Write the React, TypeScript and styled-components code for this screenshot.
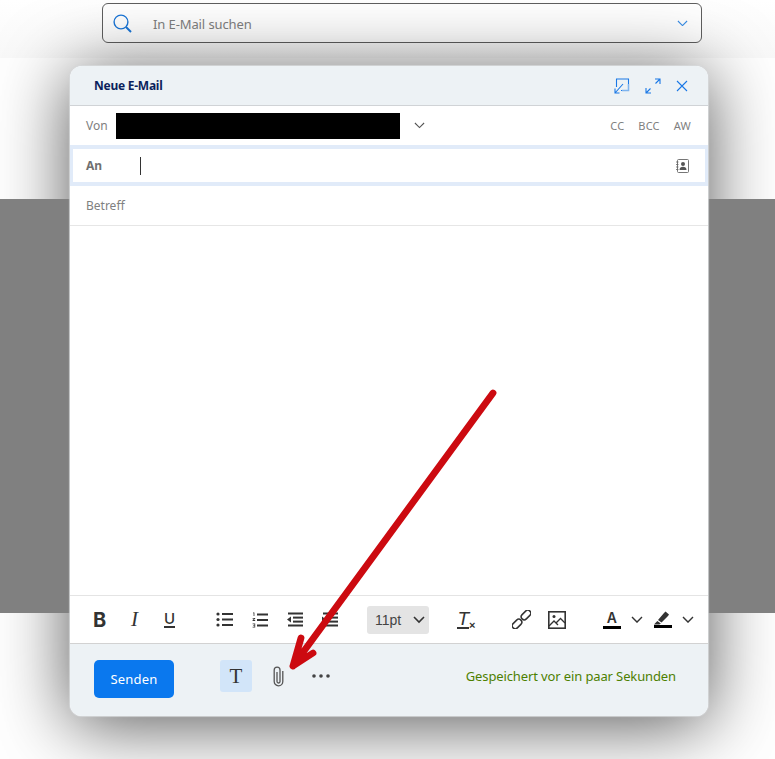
import React from 'react';
import styled, { createGlobalStyle } from 'styled-components';

const Global = createGlobalStyle`
  html, body { margin: 0; padding: 0; background: #fff; }
  body { font-family: "Noto Sans", "Open Sans", sans-serif; }
`;

const Page = styled.div`
  position: relative;
  width: 775px;
  height: 759px;
  overflow: hidden;
  background: #fff;
`;

const SearchStrip = styled.div`
  height: 58px;
  padding: 3px 73px 0 102px;
  box-sizing: border-box;
  background: linear-gradient(#fff, #f9f9f9);
`;

const SearchBar = styled.div`
  height: 40px;
  box-sizing: border-box;
  display: flex;
  align-items: center;
  padding: 0 13px 0 10px;
  background: #fff;
  border: 1px solid #5f5f5f;
  border-radius: 6px;
`;

const SearchText = styled.span`
  flex: 1;
  margin-left: 21px;
  padding-top: 2px;
  font-size: 13px;
  letter-spacing: -0.1px;
  color: #808080;
`;

const Backdrop = styled.div`
  position: relative;
  z-index: 2;
  height: 414px;
  margin-top: 141px;
  background: #808080;
`;

const CardShadow = styled.div`
  position: absolute;
  z-index: 1;
  left: 70px;
  top: 66px;
  width: 638px;
  height: 650px;
  border-radius: 12px;
  box-shadow: 0 8px 72px rgba(0, 0, 0, 0.68);
`;

const Card = styled.div`
  position: absolute;
  z-index: 3;
  left: 70px;
  top: 66px;
  width: 638px;
  height: 650px;
  box-sizing: border-box;
  display: flex;
  flex-direction: column;
  background: #fff;
  border-radius: 12px;
  overflow: hidden;
  box-shadow: 0 0 1px 1px rgba(214, 216, 218, 0.85);
`;

const Header = styled.div`
  height: 40px;
  box-sizing: border-box;
  flex: none;
  display: flex;
  align-items: center;
  padding: 0 20px 0 24px;
  background: #edf2f5;
  border-bottom: 1px solid #d0d3d6;
`;

const Title = styled.span`
  flex: 1;
  font-size: 12px;
  font-weight: 700;
  letter-spacing: -0.25px;
  color: #0b1f5c;
`;

const HeaderIcons = styled.div`
  display: flex;
  align-items: center;
  gap: 15px;
`;

const FromRow = styled.div`
  height: 39px;
  flex: none;
  display: flex;
  align-items: center;
  padding: 0 17px 0 16px;
`;

const FieldLabel = styled.span<{ $bold?: boolean; $width?: number }>`
  width: ${(p) => p.$width ?? 30}px;
  flex: none;
  font-size: 12px;
  font-weight: ${(p) => (p.$bold ? 700 : 400)};
  color: ${(p) => (p.$bold ? '#707070' : '#808080')};
`;

const Redacted = styled.div`
  width: 284px;
  height: 26px;
  flex: none;
  background: #000;
`;

const FromChevron = styled.div`
  flex: 1;
  display: flex;
  padding-left: 14px;
`;

const CopyLinks = styled.div`
  display: flex;
  gap: 14px;
`;

const CopyLink = styled.span`
  font-size: 11px;
  letter-spacing: 0.2px;
  color: #808080;
`;

const ToRow = styled.div`
  height: 41px;
  flex: none;
  box-sizing: border-box;
  display: flex;
  align-items: center;
  padding: 0 16px 0 13px;
  border: solid #e1ebf9;
  border-width: 4px 3px;
`;

const Caret = styled.div`
  flex: 1;
  display: flex;
  &::before {
    content: '';
    width: 1px;
    height: 18px;
    background: #333;
  }
`;

const SubjectRow = styled.div`
  height: 40px;
  flex: none;
  box-sizing: border-box;
  display: flex;
  align-items: center;
  padding: 0 16px;
  border-bottom: 1px solid #e6e6e6;
`;

const Editor = styled.div`
  flex: 1;
`;

const Toolbar = styled.div`
  height: 49px;
  flex: none;
  box-sizing: border-box;
  display: flex;
  align-items: center;
  padding-left: 12px;
  border-top: 1px solid #e4e4e4;
  border-bottom: 1px solid #d2d2d2;
`;

const ToolGroup = styled.div<{ $after?: number }>`
  display: flex;
  align-items: center;
  margin-right: ${(p) => p.$after ?? 20}px;
`;

const Tool = styled.div<{ $narrow?: boolean }>`
  width: ${(p) => (p.$narrow ? 25.5 : 35)}px;
  height: 28px;
  display: flex;
  align-items: center;
  justify-content: center;
  color: #333;
`;

const BoldGlyph = styled.span`
  font: 700 20px "Inter", "Liberation Sans", sans-serif;
  color: #333;
`;

const ItalicGlyph = styled.span`
  font: italic 400 21px "Liberation Serif", serif;
  color: #333;
`;

const UnderGlyph = styled.span`
  font: 500 15px "Inter", "Liberation Sans", sans-serif;
  line-height: 14px;
  color: #333;
  border-bottom: 2px solid #333;
`;

const ClearGlyph = styled.span`
  font: italic 400 19px "Liberation Sans", sans-serif;
  line-height: 17px;
  color: #333;
  border-bottom: 2px solid #333;
`;

const ClearMark = styled.span`
  font: 700 11px "Liberation Sans", sans-serif;
  color: #333;
  align-self: flex-end;
  margin-bottom: 3px;
`;

const ColorA = styled.span`
  width: 18px;
  text-align: center;
  font: 600 14px "Inter", "Liberation Sans", sans-serif;
  line-height: 16px;
  color: #333;
  border-bottom: 3px solid #000;
`;

const SizeSelect = styled.div`
  width: 62px;
  height: 28px;
  box-sizing: border-box;
  display: flex;
  align-items: center;
  justify-content: space-between;
  padding: 0 3px 0 8px;
  background: #e4e4e4;
  border-radius: 3px;
  font: 400 14px "Liberation Sans", sans-serif;
  color: #444;
`;

const Footer = styled.div`
  height: 72px;
  flex: none;
  box-sizing: border-box;
  display: flex;
  align-items: flex-start;
  padding: 16px 32px 0 24px;
  background: #edf2f5;
`;

const SendButton = styled.button`
  width: 80px;
  height: 38px;
  padding: 0;
  border: 0;
  border-radius: 5px;
  background: #0a78ee;
  color: #fff;
  font: 400 13px "Noto Sans", sans-serif;
  letter-spacing: 0.2px;
`;

const FormatToggle = styled.div`
  width: 32px;
  height: 32px;
  margin-left: 46px;
  display: flex;
  align-items: center;
  justify-content: center;
  background: #d2e5f9;
  border-radius: 3px;
  font: 400 21px "Liberation Serif", serif;
  color: #333;
`;

const ClipSlot = styled.div`
  width: 11px;
  height: 32px;
  margin-left: 21px;
  display: flex;
  align-items: center;
`;

const DotsSlot = styled.div`
  height: 32px;
  margin-left: 28px;
  flex: 1;
  display: flex;
  align-items: center;
`;

const SavedText = styled.span`
  height: 32px;
  line-height: 32px;
  font-size: 13px;
  letter-spacing: -0.12px;
  color: #4d8000;
`;

const ArrowLayer = styled.svg`
  position: absolute;
  z-index: 4;
  left: 0;
  top: 0;
  pointer-events: none;
`;

const Chevron = ({ color = '#555', w = 12, weight = 1.2 }: { color?: string; w?: number; weight?: number }) => (
  <svg width={w} height={w * 0.6} viewBox="0 0 12 7" fill="none" stroke={color} strokeWidth={weight}>
    <path d="M1 1l5 5 5-5" />
  </svg>
);

const BulletList = () => (
  <svg width="17" height="15" viewBox="0 0 17 15" fill="#333">
    <circle cx="2" cy="2" r="1.600" />
    <circle cx="2" cy="7.500" r="1.600" />
    <circle cx="2" cy="13" r="1.600" />
    <rect x="6" y="1" width="11" height="2" />
    <rect x="6" y="6.500" width="11" height="2" />
    <rect x="6" y="12" width="11" height="2" />
  </svg>
);

const NumberList = () => (
  <svg width="16" height="16" viewBox="0 0 16 16" fill="#333">
    <path d="M1 .5h1.400v3.500h-.8V1.300H1zM.6 6h2.600v.8L1.700 8.100h1.500v.8H.6v-.8l1.600-1.300H.6zM.6 11.600h2.600v3.800H.6v-.7h1.800v-.9H1v-.6h1.400v-.9H.6z" />
    <rect x="5" y="1.500" width="11" height="2" />
    <rect x="5" y="7" width="11" height="2" />
    <rect x="5" y="12.500" width="11" height="2" />
  </svg>
);

const Outdent = ({ flip }: { flip?: boolean }) => (
  <svg width="17" height="15" viewBox="0 0 17 15" fill="#333">
    <rect x="2" y="0.500" width="15" height="2" />
    <rect x="7" y="4.600" width="10" height="2" />
    <rect x="7" y="8.600" width="10" height="2" />
    <rect x="2" y="12.500" width="15" height="2" />
    {flip ? <path d="M1 4.500l4 3-4 3z" /> : <path d="M5 4.500v6l-4-3z" />}
  </svg>
);

export default function App() {
  return (
    <Page>
      <Global />
      <SearchStrip>
        <SearchBar>
          <svg width="19" height="19" viewBox="0 0 19 19" fill="none" stroke="#1a76d8">
            <circle cx="8" cy="8" r="6.900" strokeWidth="1.400" />
            <path d="M13 13l5 5" strokeWidth="2" />
          </svg>
          <SearchText>In E-Mail suchen</SearchText>
          <Chevron color="#3a8fe8" w={11} />
        </SearchBar>
      </SearchStrip>
      <Backdrop />
      <CardShadow />
      <Card>
        <Header>
          <Title>Neue E-Mail</Title>
          <HeaderIcons>
            <svg width="16" height="16" viewBox="0 0 16 16" fill="none" stroke="#1a78e6">
              <path d="M2.500 9V1H14.500V12.500H7" strokeWidth="1.100" />
              <path d="M14.500 6v6.500H8" stroke="#7fb4ee" strokeWidth="1.400" />
              <path d="M9 6L1 15M1 10.500V15H5.500" strokeWidth="1.100" />
            </svg>
            <svg width="16" height="16" viewBox="0 0 16 16" fill="none" stroke="#1a78e6" strokeWidth="1.100">
              <path d="M10 1h5v5M15 1L10.500 5.500M6 15H1v-5M1 15l4.500-4.500" />
            </svg>
            <svg width="12" height="12" viewBox="0 0 12 12" fill="none" stroke="#1a78e6" strokeWidth="1.100">
              <path d="M1 1l10 10M11 1L1 11" />
            </svg>
          </HeaderIcons>
        </Header>
        <FromRow>
          <FieldLabel>Von</FieldLabel>
          <Redacted />
          <FromChevron>
            <Chevron color="#555" w={11} />
          </FromChevron>
          <CopyLinks>
            <CopyLink>CC</CopyLink>
            <CopyLink>BCC</CopyLink>
            <CopyLink>AW</CopyLink>
          </CopyLinks>
        </FromRow>
        <ToRow>
          <FieldLabel $bold $width={54}>An</FieldLabel>
          <Caret />
          <svg width="13" height="14" viewBox="0 0 13 14" fill="none" stroke="#666" strokeWidth="0.900">
            <rect x="1.500" y="0.500" width="11" height="13" rx="1" />
            <path d="M0 3h2.500M0 5.500h2.500M0 8h2.500M0 10.500h2.500" strokeWidth="0.800" />
            <circle cx="7" cy="5" r="2" fill="#555" stroke="none" />
            <path d="M3.500 11c0-2.500 1.500-3.300 3.500-3.300s3.500.8 3.500 3.300z" fill="#555" stroke="none" />
          </svg>
        </ToRow>
        <SubjectRow>
          <FieldLabel>Betreff</FieldLabel>
        </SubjectRow>
        <Editor />
        <Toolbar>
          <ToolGroup>
            <Tool><BoldGlyph>B</BoldGlyph></Tool>
            <Tool><ItalicGlyph>I</ItalicGlyph></Tool>
            <Tool><UnderGlyph>U</UnderGlyph></Tool>
          </ToolGroup>
          <ToolGroup>
            <Tool><BulletList /></Tool>
            <Tool><NumberList /></Tool>
            <Tool><Outdent /></Tool>
            <Tool><Outdent flip /></Tool>
          </ToolGroup>
          <ToolGroup>
            <SizeSelect>
              11pt
              <svg width="14" height="8" viewBox="0 0 14 8" fill="none" stroke="#333" strokeWidth="1.600">
                <path d="M2 1l5 5 5-5" />
              </svg>
            </SizeSelect>
          </ToolGroup>
          <ToolGroup>
            <Tool>
              <ClearGlyph>T</ClearGlyph>
              <ClearMark>×</ClearMark>
            </Tool>
          </ToolGroup>
          <ToolGroup $after={25}>
            <Tool>
              <svg width="19" height="19" viewBox="0 0 19 19" fill="none" stroke="#333" strokeWidth="1.500">
                <rect x="-0.500" y="11" width="11" height="6" rx="3" transform="rotate(-45 5 14)" />
                <rect x="8.500" y="2" width="11" height="6" rx="3" transform="rotate(-45 14 5)" />
              </svg>
            </Tool>
            <Tool>
              <svg width="18" height="18" viewBox="0 0 18 18" fill="none" stroke="#333" strokeWidth="1.600">
                <rect x="0.800" y="0.800" width="16.400" height="16.400" />
                <circle cx="6" cy="5.500" r="1.500" fill="#333" stroke="none" />
                <path d="M1 15l5-5 4 4M8 12l4.500-4.500L17 12" strokeWidth="1.300" />
              </svg>
            </Tool>
          </ToolGroup>
          <ToolGroup>
            <Tool $narrow><ColorA>A</ColorA></Tool>
            <Tool $narrow><Chevron color="#333" weight={1.4} /></Tool>
            <Tool $narrow>
              <svg width="18" height="17" viewBox="0 0 18 17">
                <path d="M11.500 0.500l3.500 3-1 1.500-6.500 6.500L4 9l6-7zM3.300 10l3.500 2.500-1.500 1H0z" fill="#333" />
                <rect y="14" width="18" height="3" fill="#000" />
              </svg>
            </Tool>
            <Tool $narrow><Chevron color="#333" weight={1.4} /></Tool>
          </ToolGroup>
        </Toolbar>
        <Footer>
          <SendButton>Senden</SendButton>
          <FormatToggle>T</FormatToggle>
          <ClipSlot>
            <svg width="11" height="21" viewBox="0 0 11 21" fill="none" stroke="#555" strokeWidth="1.300">
              <path d="M4 6v9.500a1.500 1.500 0 0 0 3 0V4a2.800 2.800 0 0 0-5.800 0v11.500a4.300 4.300 0 0 0 8.600 0V5" />
            </svg>
          </ClipSlot>
          <DotsSlot>
            <svg width="18" height="4" viewBox="0 0 18 4" fill="#444">
              <circle cx="2" cy="2" r="1.800" />
              <circle cx="9" cy="2" r="1.800" />
              <circle cx="16" cy="2" r="1.800" />
            </svg>
          </DotsSlot>
          <SavedText>Gespeichert vor ein paar Sekunden</SavedText>
        </Footer>
      </Card>
      <ArrowLayer width="775" height="759" viewBox="0 0 775 759" fill="none" stroke="#cc0a10" strokeWidth="6.800" strokeLinecap="round" strokeLinejoin="round">
        <path d="M493 393L293 666M301 638L293 666L313 653" />
      </ArrowLayer>
    </Page>
  );
}
